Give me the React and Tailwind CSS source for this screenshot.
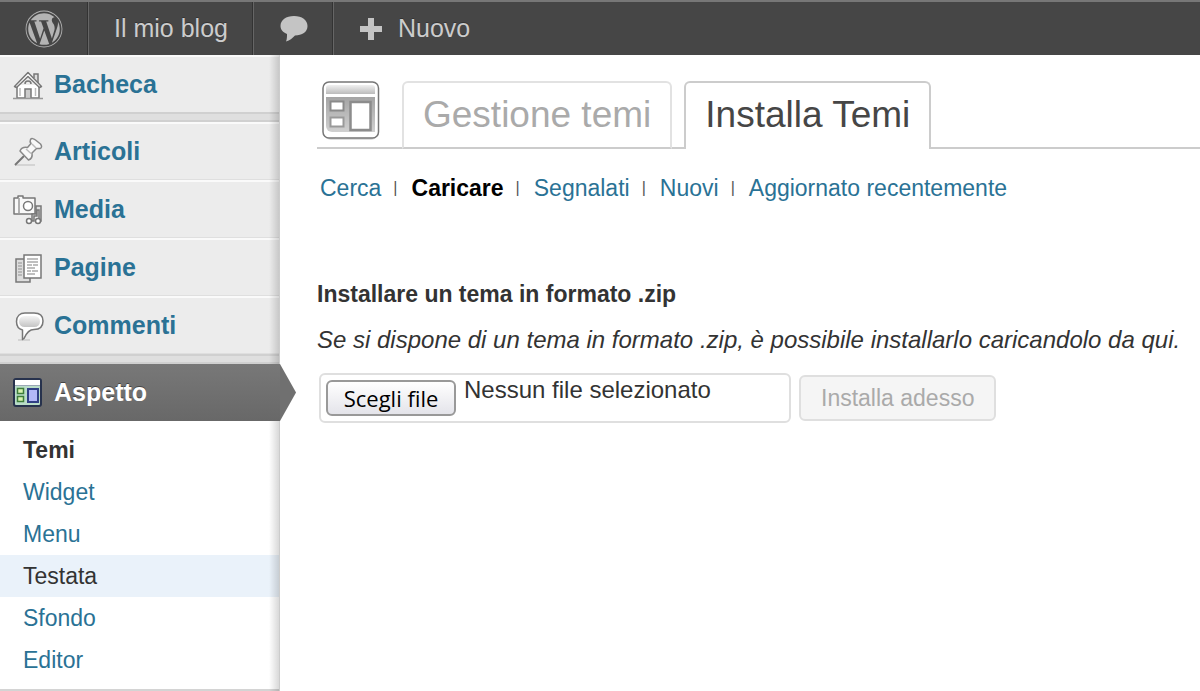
import { FaWordpress } from 'react-icons/fa';

const HomeIcon = () => (
  <svg width="32" height="32" viewBox="0 0 32 32" fill="none" stroke="#777" strokeWidth="1.5" aria-hidden="true">
    <path d="M5 16v13h22V16" fill="#fff" />
    <path d="M22 9V5h4v9" fill="#ddd" />
    <path d="M2.500 17.500 16 3.500l13.500 14-2 1L16 7.500 4.500 18.500Z" fill="#fff" strokeLinejoin="round" />
    <path d="M13 29v-9h6v9" fill="#ccc" />
    <path d="M13 15a3 3 0 0 1 6 0" />
    <path d="M8 19v8M23.500 19v8" stroke="#bbb" />
    <path d="M1 29.500h30" stroke="#999" />
  </svg>
);

const PinIcon = () => (
  <svg width="32" height="32" viewBox="0 0 32 32" fill="none" stroke="#888" strokeWidth="1.5" aria-hidden="true">
    <path d="M3 29h20" stroke="#ccc" />
    <path d="M12 20 3 29" stroke="#777" strokeWidth="2" />
    <path
      d="M18.500 3.500c1-1.500 3-1 5 .5l5 4c1.500 2 1.500 4-.5 4.500-1.500.3-2.500 0-3.500 0L20 17c.5 3-.5 6-3.500 7L8 15c1.500-3.500 4.500-4 7.500-3.500L19 7.500c-1-1.500-1.200-2.700-.5-4Z"
      fill="#f8f8f8"
      strokeLinejoin="round"
    />
    <path d="m20 8 4 4M14 13l5 4.500" stroke="#bbb" />
  </svg>
);

const MediaIcon = () => (
  <svg width="32" height="32" viewBox="0 0 32 32" fill="none" stroke="#777" strokeWidth="1.500" aria-hidden="true">
    <path d="M2 4h4V2h5v2h12v16H2Z" fill="#f8f8f8" strokeLinejoin="round" />
    <path d="M7 4v16" stroke="#999" />
    <circle cx="16" cy="12" r="4.500" fill="#fff" />
    <path d="M20 27v-7h4v-8h5v15h-2V16h-2v6h-3v5Z" fill="#ddd" />
    <circle cx="17" cy="27" r="2.500" fill="#fff" />
    <circle cx="26" cy="27" r="2.500" fill="#fff" />
  </svg>
);

const PagesIcon = () => (
  <svg width="32" height="32" viewBox="0 0 32 32" fill="none" stroke="#777" strokeWidth="1.500" aria-hidden="true">
    <path d="M4 7h14v23H4Z" fill="#ddd" />
    <path d="M6 11h4M6 14h4M6 17h4M6 20h4M6 23h4" stroke="#aaa" />
    <path d="M12 3h17v23H12Z" fill="#fff" />
    <path d="M15 7h11M15 10h11M15 13h5M21 13h5M15 16h8M15 19h4M20 19h6M15 22h8" stroke="#aaa" />
  </svg>
);

const CommentsIcon = () => (
  <svg width="32" height="32" viewBox="0 0 32 32" fill="none" aria-hidden="true">
    <defs>
      <linearGradient id="bubble" x1="0" y1="0" x2="0" y2="1">
        <stop offset="0" stopColor="#f4f4f4" />
        <stop offset="1" stopColor="#c4c4c4" />
      </linearGradient>
    </defs>
    <path d="M6 30h12" stroke="#bbb" />
    <path
      d="M13 3h9c6 0 9 3 9 8s-3 8.500-9 8.500c-4 0-7 2-10 9l-1.500 1v-9.500c-4-1-6-4.500-6-8.500C4.500 6 8 3 13 3Z"
      fill="#fff"
      stroke="#777"
      strokeWidth="1.500"
      strokeLinejoin="round"
    />
    <rect x="7" y="6" width="21" height="11" rx="5.500" fill="url(#bubble)" />
  </svg>
);

const ThemesIcon = () => (
  <svg width="32" height="32" viewBox="0 0 32 32" aria-hidden="true">
    <rect x="2" y="2" width="27" height="27" rx="2" fill="#b9dcc8" stroke="#27324d" strokeWidth="2" />
    <path d="M3 3h25v5H3Z" fill="#fff" />
    <path d="M3 8.500h25" stroke="#9aa7b5" />
    <rect x="5.500" y="11.500" width="6" height="5" fill="#d8f3b0" stroke="#3e7d3a" strokeWidth="1.500" />
    <rect x="5.500" y="19.500" width="6" height="5" fill="#d8f3b0" stroke="#3e7d3a" strokeWidth="1.500" />
    <rect x="16" y="12" width="10" height="13" fill="#b3b8f8" stroke="#303f85" strokeWidth="2" />
  </svg>
);

const ScreenIcon = () => (
  <svg className="shrink-0" width="60" height="62" viewBox="0 1 60 62" aria-hidden="true">
    <defs>
      <linearGradient id="screenBar" x1="0" y1="0" x2="0" y2="1">
        <stop offset="0" stopColor="#f0f0f0" />
        <stop offset="1" stopColor="#bbb" />
      </linearGradient>
      <linearGradient id="screenBody" x1="0" y1="0" x2="0" y2="1">
        <stop offset="0" stopColor="#a4a4a4" />
        <stop offset="1" stopColor="#d0d0d0" />
      </linearGradient>
    </defs>
    <rect x="4" y="3" width="52" height="57" rx="6" fill="#ddd" />
    <rect x="2" y="2" width="55.500" height="56" rx="6" fill="#fff" stroke="#777" strokeWidth="1.500" />
    <path d="M5 8a3 3 0 0 1 3-3h43a3 3 0 0 1 3 3v6H5Z" fill="url(#screenBar)" />
    <path d="M5 17h49v35h-43a6 6 0 0 1-6-6Z" fill="url(#screenBody)" />
    <rect x="9.500" y="21.500" width="13" height="9" fill="#fff" stroke="#8a8a8a" strokeWidth="2" />
    <rect x="9.500" y="37.500" width="13" height="9" fill="#fff" stroke="#999" strokeWidth="2" />
    <rect x="29.500" y="22" width="20" height="28" fill="#fff" stroke="#8c8c8c" strokeWidth="2.500" />
  </svg>
);

const topItem = 'flex items-center border-l border-[#666] shadow-[-1px_0_0_#333] text-[#ccc]';

const menu = [
  { label: 'Articoli', icon: <PinIcon /> },
  { label: 'Media', icon: <MediaIcon /> },
  { label: 'Pagine', icon: <PagesIcon /> },
  { label: 'Commenti', icon: <CommentsIcon /> },
];

const submenu = ['Temi', 'Widget', 'Menu', 'Testata', 'Sfondo', 'Editor'];

const filters = ['Cerca', 'Caricare', 'Segnalati', 'Nuovi', 'Aggiornato recentemente'];

const MenuLink = ({ label, icon }) => (
  <a
    href="#"
    className="flex h-[57px] items-center gap-[10px] border-t-2 border-[#fafafa] pl-3 text-[25px] font-bold text-[#2a7295]"
  >
    {icon}
    {label}
  </a>
);

const MenuSeparator = () => <div className="h-[10px] border-y-2 border-[#d0d0d0] bg-[#dfdfdf]" />;

const TopBar = () => (
  <header className="flex h-[55px] border-t-2 border-[#777] bg-[#464646] text-[25px] text-shadow-[0_-1px_0_#333]">
    <a href="#" aria-label="WordPress" className="flex w-[88px] items-center justify-center text-[#b4b4b4]">
      <FaWordpress size={38} />
    </a>
    <a href="#" className={`${topItem} w-[165px] justify-center`}>
      Il mio blog
    </a>
    <a href="#" aria-label="Commenti" className={`${topItem} w-20 justify-center`}>
      <svg width="28" height="28" viewBox="0 0 28 28" fill="#c4c4c4" aria-hidden="true">
        <path d="M14 1c8 0 13.500 4 13.500 10S22 20.500 15 20.500c-3 3-5 5-9 6 1-2.500 1-5 1-7.500-4-1.500-6.500-4.500-6.500-8C.5 5 6 1 14 1Z" />
      </svg>
    </a>
    <a href="#" className={`${topItem} gap-4 px-[26px]`}>
      <svg width="22" height="22" viewBox="0 0 22 22" fill="#c4c4c4" aria-hidden="true">
        <path d="M8 0h6v8h8v6h-8v8H8v-8H0V8h8Z" />
      </svg>
      Nuovo
    </a>
  </header>
);

const Sidebar = () => (
  <nav className="relative w-[280px] shrink-0 border-r border-[#ccc] bg-[#ececec]">
    <MenuLink label="Bacheca" icon={<HomeIcon />} />
    <MenuSeparator />
    {menu.map((item) => (
      <div key={item.label} className="border-b border-[#dfdfdf] last-of-type:border-b-0">
        <MenuLink {...item} />
      </div>
    ))}
    <MenuSeparator />
    <a
      href="#"
      className="relative z-10 -mr-px flex h-[57px] items-center gap-[10px] bg-linear-to-b from-[#787878] to-[#686868] pl-3 text-[25px] font-bold text-white text-shadow-[0_-1px_0_#444]"
    >
      <ThemesIcon />
      Aspetto
      <svg className="absolute top-0 left-full" width="16" height="57" viewBox="0 0 16 57" aria-hidden="true">
        <path d="M0 0 16 28.500 0 57Z" fill="#707070" />
      </svg>
    </a>
    <ul className="border-b-2 border-[#d4d4d4] bg-white py-2 text-[23px] leading-[42px]">
      {submenu.map((label) => (
        <li key={label}>
          <a
            href="#"
            className={
              label === 'Temi'
                ? 'block pl-[23px] font-bold text-[#333]'
                : label === 'Testata'
                  ? 'block bg-[#eaf2fa] pl-[23px] text-[#333]'
                  : 'block pl-[23px] text-[#2a7295]'
            }
          >
            {label}
          </a>
        </li>
      ))}
    </ul>
    <div className="pointer-events-none absolute inset-y-0 right-0 w-[10px] bg-linear-to-r from-transparent to-black/15" />
  </nav>
);

const App = () => {
  return (
    <div className="flex min-h-screen flex-col bg-white font-['Liberation_Sans',Arial,sans-serif] text-[#333]">
      <TopBar />
      <div className="flex grow">
        <Sidebar />
        <main className="min-w-0 grow pt-[26px] pl-[37px] text-[23px]">
          <div className="flex text-[37px] leading-[64px] whitespace-nowrap">
            <div className="w-[85px] border-b-2 border-[#ccc] pl-1">
              <ScreenIcon />
            </div>
            <a
              href="#"
              className="rounded-t-md border-2 border-[#e2e2e2] border-b-[#ccc] px-[19px] text-[#aaa]"
            >
              Gestione temi
            </a>
            <div className="w-3 border-b-2 border-[#ccc]" />
            <h1 className="rounded-t-md border-2 border-b-0 border-[#ccc] px-[19px] text-[#464646]">
              Installa Temi
            </h1>
            <div className="grow border-b-2 border-[#ccc]" />
          </div>

          <ul className="mt-[25px] flex flex-wrap pl-[3px] leading-[28px]">
            {filters.map((label, i) => (
              <li key={label} className="flex items-center">
                {i > 0 && <span className="mr-[14px] ml-3 text-[16px] text-[#555]">|</span>}
                <a href="#" className={label === 'Caricare' ? 'font-bold text-black' : 'text-[#2a7295]'}>
                  {label}
                </a>
              </li>
            ))}
          </ul>

          <h2 className="mt-[77px] leading-[30px] font-bold">Installare un tema in formato .zip</h2>
          <p className="mt-4 text-[24px] leading-[30px] italic">
            Se si dispone di un tema in formato .zip, è possibile installarlo caricandolo da qui.
          </p>
          <form className="mt-[18px] flex items-center gap-2 pl-[2px]" onSubmit={(e) => e.preventDefault()}>
            <label className="flex h-[50px] w-[472px] cursor-pointer gap-2 rounded-md border-2 border-[#dfdfdf] bg-white px-[5px]">
              <input type="file" accept=".zip" className="sr-only" />
              <span className="mt-[5px] flex h-9 w-[130px] items-center justify-center rounded-md border-2 border-[#999] bg-linear-to-b from-white to-[#e4e4ea] font-['Open_Sans',sans-serif] text-[22px] text-black">
                Scegli file
              </span>
              <span className="text-[24px] leading-[30px]">Nessun file selezionato</span>
            </label>
            <button
              type="submit"
              disabled
              className="h-[46px] rounded-md border-2 border-[#dfdfdf] bg-[#f5f5f5] px-5 text-[#aaa]"
            >
              Installa adesso
            </button>
          </form>
        </main>
      </div>
    </div>
  );
};

export default App;
